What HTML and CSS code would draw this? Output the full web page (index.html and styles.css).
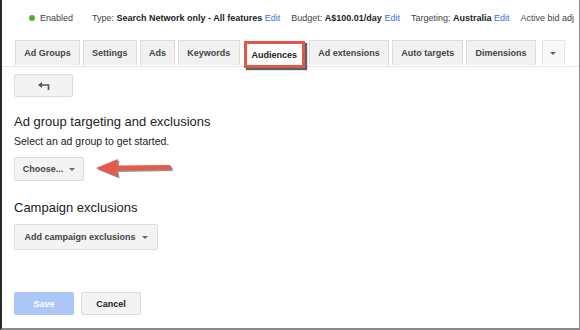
FILE: index.html
```html
<!DOCTYPE html>
<html lang="en">
<head>
  <meta charset="UTF-8" />
  <title>Audiences</title>
  <link rel="stylesheet" href="styles.css">
</head>
<body>
  <div class="frame">
    <div class="status-bar">
      <span class="status"><span class="dot"></span>Enabled</span>
      <span class="info">Type: <b>Search Network only - All features</b> <a>Edit</a></span>
      <span class="info">Budget: <b>A$100.01/day</b> <a>Edit</a></span>
      <span class="info">Targeting: <b>Australia</b> <a>Edit</a></span>
      <span class="info">Active bid adj</span>
    </div>

    <div class="tabs">
      <div class="tab">Ad Groups</div>
      <div class="tab">Settings</div>
      <div class="tab">Ads</div>
      <div class="tab">Keywords</div>
      <div class="tab active">Audiences</div>
      <div class="tab">Ad extensions</div>
      <div class="tab">Auto targets</div>
      <div class="tab">Dimensions</div>
      <div class="tab more"><span class="caret"></span></div>
    </div>

    <div class="content">
      <button class="btn back">
        <svg width="12" height="8" viewBox="0 0 12 8">
          <polygon points="0,3 4,0 4,6" fill="#555" />
          <path d="M3 3 H10.5 V8" fill="none" stroke="#555" stroke-width="1.6" />
        </svg>
      </button>

      <h2>Ad group targeting and exclusions</h2>
      <p class="hint">Select an ad group to get started.</p>
      <div class="choose-row">
        <button class="btn drop choose">Choose... <span class="caret"></span></button>
        <svg class="pointer" width="82" height="24" viewBox="0 0 82 24">
          <path d="M22 8.5 L75 8 Q77 10 76 12.5 L22 13.5 L23 20 L1 11 L23 2 Z" fill="#3a3a3a" opacity="0.55" transform="translate(1.5 1.5)" />
          <path d="M22 8.5 L75 8 Q77 10 76 12.5 L22 13.5 L23 20 L1 11 L23 2 Z" fill="#e45b4c" />
        </svg>
      </div>

      <h2 class="second">Campaign exclusions</h2>
      <button class="btn drop wide">Add campaign exclusions <span class="caret"></span></button>

      <div class="actions">
        <button class="btn save">Save</button>
        <button class="btn cancel">Cancel</button>
      </div>
    </div>
  </div>
</body>
</html>
```

FILE: styles.css
```css
body {
  margin: 0;
  font-family: 'Liberation Sans', Arial, sans-serif;
  color: #222;
  background: #fff;
}
.frame {
  width: 580px;
  height: 330px;
  box-sizing: border-box;
  border-left: 2px solid #2a2a2a;
  border-right: 1px solid #8a8a8a;
  border-bottom: 2px solid #8a8a8a;
  overflow: hidden;
}
.status-bar {
  display: flex;
  align-items: center;
  height: 17px;
  padding: 9px 0 0 27px;
  font-size: 9px;
  color: #444;
  white-space: nowrap;
}
.status {
  display: flex;
  align-items: center;
  margin-right: 19px;
}
.dot {
  width: 6px;
  height: 6px;
  border-radius: 50%;
  background: #53b02a;
  margin-right: 5px;
}
.info {
  margin-right: 11px;
}
.info b {
  color: #222;
}
.info a {
  color: #3b6fd9;
}
.tabs {
  display: flex;
  align-items: flex-end;
  gap: 3px;
  margin-top: 14px;
  padding-left: 13px;
  border-bottom: 1px solid #e6e6e6;
  height: 26px;
}
.tab {
  display: flex;
  align-items: center;
  flex-shrink: 0;
  white-space: nowrap;
  height: 24px;
  padding: 0 8.2px;
  margin-bottom: 1px;
  font-size: 9px;
  font-weight: bold;
  color: #444;
  background: #f1f1f1;
  border: 1px solid #dcdcdc;
  border-bottom: none;
}
.tab.active {
  background: #fff;
  color: #222;
  border: 3px solid #e0584a;
  height: 21px;
  padding: 0 5px;
  margin: 0 1px 0 1px;
  position: relative;
  top: 2px;
  box-shadow: 2px 2px 1px rgba(40, 40, 40, 0.75);
}
.tab.more {
  margin-left: 3px;
  width: 5px;
  background: #f8f8f8;
  border-color: #e6e6e6;
  justify-content: center;
}
.caret {
  display: inline-block;
  width: 0;
  height: 0;
  border-left: 3px solid transparent;
  border-right: 3px solid transparent;
  border-top: 3px solid #666;
  vertical-align: middle;
  margin-left: 4px;
}
.tab.more .caret {
  margin-left: 0;
}
.content {
  padding: 7px 0 0 12px;
}
.btn {
  display: inline-flex;
  align-items: center;
  justify-content: center;
  height: 24px;
  box-sizing: border-box;
  padding: 0 9px;
  font-family: inherit;
  font-size: 9px;
  font-weight: bold;
  color: #444;
  background: #f3f3f3;
  border: 1px solid #dcdcdc;
  border-radius: 2px;
}
.back {
  width: 59px;
  height: 23px;
}
h2 {
  margin: 16px 0 0;
  font-size: 13px;
  font-weight: normal;
  line-height: 17px;
  color: #222;
}
.hint {
  margin: 5px 0 0;
  font-size: 10.5px;
  line-height: 13px;
  color: #222;
}
.choose-row {
  display: flex;
  align-items: center;
  margin-top: 9px;
}
.drop {
  height: 24px;
}
.drop .caret {
  margin-left: 6px;
}
.choose {
  width: 70px;
  padding: 0;
}
.pointer {
  margin-left: 11px;
}
h2.second {
  margin-top: 18px;
}
.wide {
  margin-top: 8px;
  height: 26px;
  width: 144px;
}
.actions {
  display: flex;
  gap: 7px;
  margin-top: 42px;
}
.save {
  width: 60px;
  height: 23px;
  background: #abc6f7;
  border-color: #abc6f7;
  color: #fff;
}
.cancel {
  width: 60px;
  height: 23px;
  color: #222;
}
```
